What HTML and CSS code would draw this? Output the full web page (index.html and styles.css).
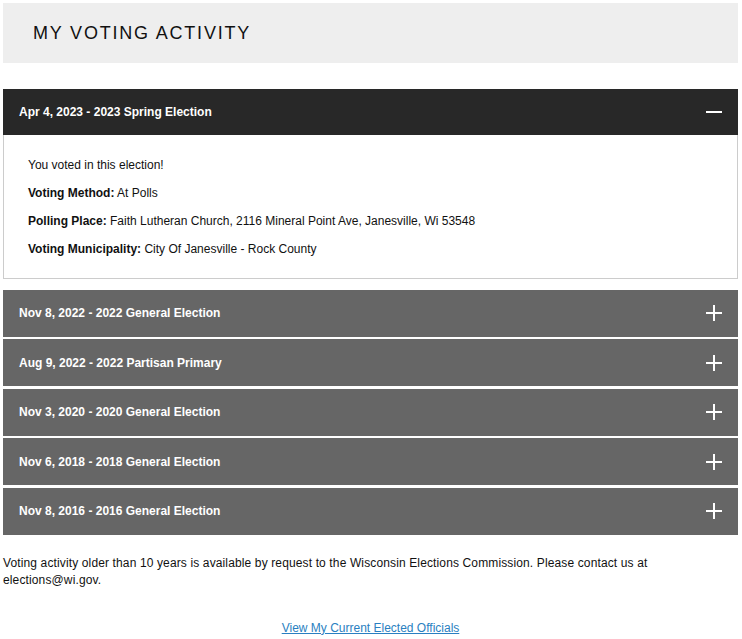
FILE: index.html
```html
<!DOCTYPE html>
<html lang="en">
<head>
<meta charset="utf-8">
<title>My Voting Activity</title>
<link rel="stylesheet" href="styles.css">
</head>
<body>
<div class="page">
  <div class="title-box"><h1 class="title">MY VOTING ACTIVITY</h1></div>

  <div class="accordion">
    <div class="acc-item open">
      <div class="acc-head">
        <span class="acc-label">Apr 4, 2023 - 2023 Spring Election</span>
        <span class="icon minus"></span>
      </div>
      <div class="acc-body">
        <p>You voted in this election!</p>
        <p><b>Voting Method:</b> At Polls</p>
        <p><b>Polling Place:</b> Faith Lutheran Church, 2116 Mineral Point Ave, Janesville, Wi 53548</p>
        <p><b>Voting Municipality:</b> City Of Janesville - Rock County</p>
      </div>
    </div>
    <div class="acc-item">
      <div class="acc-head"><span class="acc-label">Nov 8, 2022 - 2022 General Election</span><span class="icon plus"></span></div>
    </div>
    <div class="acc-item">
      <div class="acc-head"><span class="acc-label">Aug 9, 2022 - 2022 Partisan Primary</span><span class="icon plus"></span></div>
    </div>
    <div class="acc-item">
      <div class="acc-head"><span class="acc-label">Nov 3, 2020 - 2020 General Election</span><span class="icon plus"></span></div>
    </div>
    <div class="acc-item">
      <div class="acc-head"><span class="acc-label">Nov 6, 2018 - 2018 General Election</span><span class="icon plus"></span></div>
    </div>
    <div class="acc-item">
      <div class="acc-head"><span class="acc-label">Nov 8, 2016 - 2016 General Election</span><span class="icon plus"></span></div>
    </div>
  </div>

  <p class="note">Voting activity older than 10 years is available by request to the Wisconsin Elections Commission. Please contact us at elections@wi.gov.</p>

  <div class="link-row"><a href="#" class="link">View My Current Elected Officials</a></div>
</div>
</body>
</html>
```

FILE: styles.css
```css
html, body {
  margin: 0;
  padding: 0;
  background: #ffffff;
}
body {
  font-family: "Liberation Sans", Arial, sans-serif;
  font-size: 12px;
  color: #111111;
}
.page {
  padding: 3px 4px 0 3px;
}
.title-box {
  background: #eeeeee;
  height: 60px;
  display: flex;
  align-items: center;
  padding-left: 30px;
}
.title {
  margin: 0;
  font-size: 18px;
  font-weight: normal;
  letter-spacing: 1.8px;
  color: #111111;
}
.accordion {
  margin-top: 26px;
  display: flex;
  flex-direction: column;
}
.acc-item + .acc-item {
  margin-top: 2.5px;
}
.acc-head {
  height: 47px;
  background: #666666;
  color: #ffffff;
  display: flex;
  align-items: center;
  justify-content: space-between;
  padding: 0 16px 0 16px;
  font-weight: bold;
  font-size: 12px;
}
.open .acc-head {
  background: #282828;
  height: 46px;
}
.icon {
  position: relative;
  width: 16px;
  height: 16px;
  display: inline-block;
}
.icon::before, .icon::after {
  content: "";
  position: absolute;
  background: #ffffff;
}
.icon::before {
  left: 0;
  top: 7px;
  width: 16px;
  height: 2px;
}
.plus::after {
  left: 7px;
  top: 0;
  width: 2px;
  height: 16px;
}
.minus::after {
  display: none;
}
.acc-body {
  border: 1px solid #cccccc;
  border-top: none;
  padding: 23px 24px 8px 24px;
  margin-bottom: 8px;
}
.acc-body p {
  margin: 0 0 14px 0;
  line-height: 14px;
}
.note {
  margin: 20px 0 0 0;
  line-height: 17px;
  letter-spacing: 0.13px;
}
.link-row {
  margin-top: 31px;
  text-align: center;
  line-height: 17px;
}
.link {
  color: #2a7fc1;
  text-decoration: underline;
}
```
